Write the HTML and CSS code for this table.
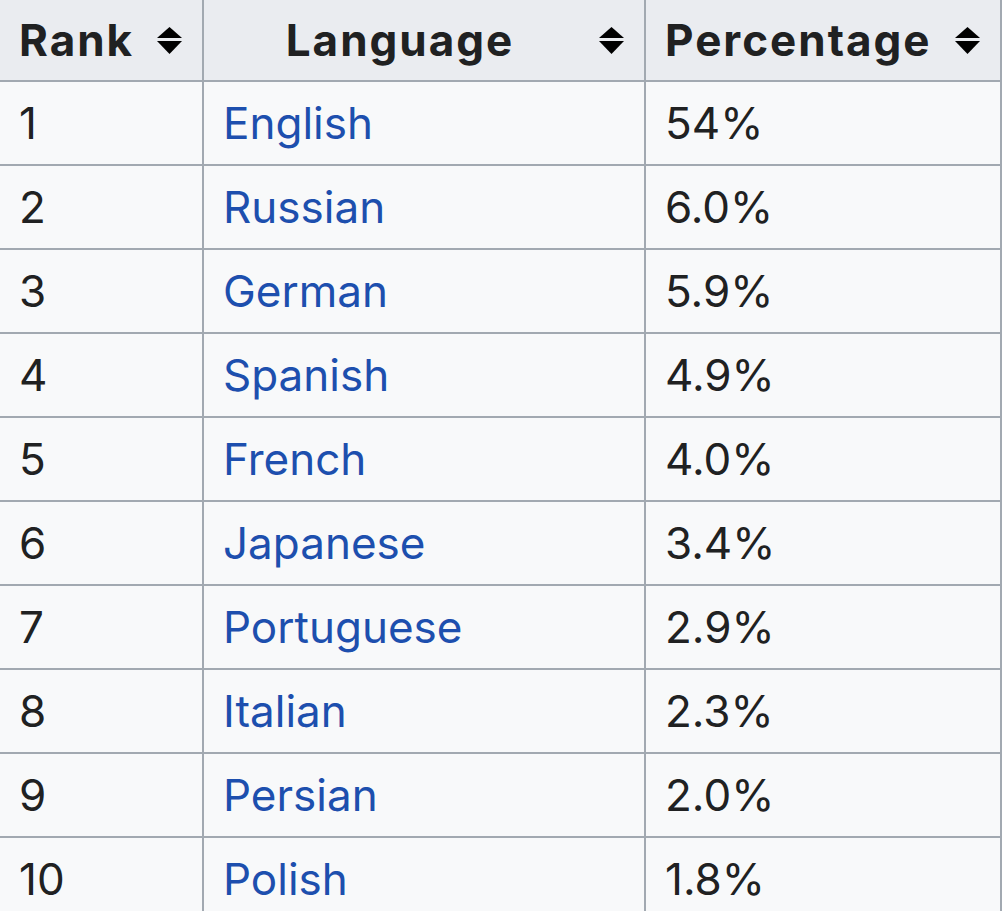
FILE: index.html
```html
<!DOCTYPE html>
<html lang="en">
<head>
<meta charset="utf-8">
<title>Languages</title>
<link rel="stylesheet" href="styles.css">
</head>
<body>
<table class="wikitable">
  <colgroup>
    <col class="c-rank">
    <col class="c-lang">
    <col class="c-pct">
  </colgroup>
  <thead>
    <tr>
      <th><div class="th-inner"><span class="label label-left">Rank</span><svg class="sort" viewBox="0 0 25 27" width="25" height="27"><polygon points="12.5,0 25,11 0,11"/><polygon points="0,14 25,14 12.5,27"/></svg></div></th>
      <th><div class="th-inner"><span class="label">Language</span><svg class="sort" viewBox="0 0 25 27" width="25" height="27"><polygon points="12.5,0 25,11 0,11"/><polygon points="0,14 25,14 12.5,27"/></svg></div></th>
      <th><div class="th-inner"><span class="label label-left">Percentage</span><svg class="sort" viewBox="0 0 25 27" width="25" height="27"><polygon points="12.5,0 25,11 0,11"/><polygon points="0,14 25,14 12.5,27"/></svg></div></th>
    </tr>
  </thead>
  <tbody>
    <tr><td>1</td><td><a href="#">English</a></td><td>54%</td></tr>
    <tr><td>2</td><td><a href="#">Russian</a></td><td>6.0%</td></tr>
    <tr><td>3</td><td><a href="#">German</a></td><td>5.9%</td></tr>
    <tr><td>4</td><td><a href="#">Spanish</a></td><td>4.9%</td></tr>
    <tr><td>5</td><td><a href="#">French</a></td><td>4.0%</td></tr>
    <tr><td>6</td><td><a href="#">Japanese</a></td><td>3.4%</td></tr>
    <tr><td>7</td><td><a href="#">Portuguese</a></td><td>2.9%</td></tr>
    <tr><td>8</td><td><a href="#">Italian</a></td><td>2.3%</td></tr>
    <tr><td>9</td><td><a href="#">Persian</a></td><td>2.0%</td></tr>
    <tr><td>10</td><td><a href="#">Polish</a></td><td>1.8%</td></tr>
  </tbody>
</table>
</body>
</html>
```
FILE: styles.css
```css
html, body {
  margin: 0;
  padding: 0;
  background: #ffffff;
  overflow: hidden;
}

body {
  width: 1002px;
  height: 911px;
  font-family: Inter, "Noto Sans", "Liberation Sans", sans-serif;
  color: #202122;
}

.wikitable {
  border-collapse: separate;
  border-spacing: 0;
  table-layout: fixed;
  width: 1002px;
  background: #f8f9fa;
  font-size: 44px;
}

.c-rank { width: 204px; }
.c-lang { width: 442px; }
.c-pct { width: 356px; }

.wikitable th,
.wikitable td {
  border-right: 2px solid #a2a9b1;
  border-bottom: 2px solid #a2a9b1;
  padding: 0 20px;
  text-align: left;
  vertical-align: middle;
  white-space: nowrap;
}

.wikitable th {
  background: #eaecf0;
  font-weight: 700;
  height: 80px;
  line-height: 80px;
  padding-left: 19px;
  letter-spacing: 2px;
}

.wikitable td {
  height: 82px;
  line-height: 82px;
  padding-left: 19px;
}

.th-inner {
  display: flex;
  align-items: center;
  gap: 22px;
}

.label {
  flex: 1;
  text-align: center;
}

.label-left {
  text-align: left;
}

.sort {
  flex: none;
  display: block;
  fill: #000000;
}

.wikitable a {
  color: #1d4fae;
  text-decoration: none;
}
```
